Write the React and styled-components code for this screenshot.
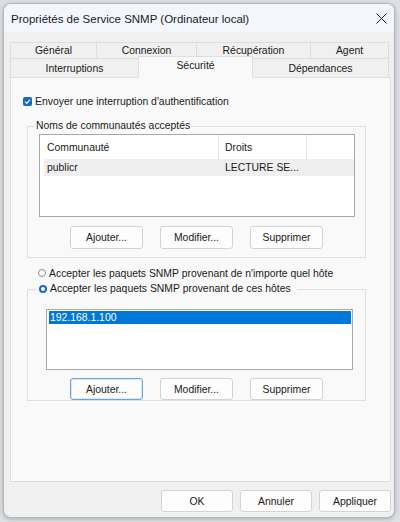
import React from "react";
import styled, { createGlobalStyle } from "styled-components";

const GlobalStyle = createGlobalStyle`
  html, body {
    margin: 0;
    padding: 0;
    background: #dde1e6;
    font-family: "Liberation Sans", Arial, sans-serif;
    font-size: 10.4px;
    color: #1a1a1a;
  }
`;

const Window = styled.div`
  width: 392px;
  height: 515px;
  margin: 3px 5px 4px 3px;
  box-sizing: border-box;
  border: 1px solid #b9b9b9;
  border-radius: 8px;
  background: #f0f0f0;
  box-shadow: 0 1px 4px rgba(0, 0, 0, 0.25);
  overflow: hidden;
  display: flex;
  flex-direction: column;
`;

const TitleBar = styled.div`
  height: 28px;
  flex-shrink: 0;
  display: flex;
  align-items: center;
  justify-content: space-between;
  padding: 0 6px 0 7px;
  background: #f3f6fb;
`;

const Title = styled.span`
  font-size: 11.5px;
  color: #1b1b1b;
  padding-top: 1px;
`;

const CloseButton = styled.button`
  width: 14px;
  height: 14px;
  padding: 0;
  border: none;
  background: none;
  display: flex;
  align-items: center;
  justify-content: center;
`;

const Body = styled.div`
  flex: 1;
  display: flex;
  flex-direction: column;
  padding: 10px 3px 0 6px;
`;

const TabRow = styled.div`
  display: flex;
  height: ${(p) => p.$height}px;
  padding-left: 1px;
`;

const Tab = styled.div`
  width: ${(p) => p.$width}px;
  box-sizing: border-box;
  display: flex;
  align-items: center;
  justify-content: center;
  border: 1px solid #dedede;
  border-bottom: none;
  margin-left: -1px;
  background: ${(p) => (p.$active ? "#f9f9f9" : "#f0f0f0")};
  position: relative;
  z-index: ${(p) => (p.$active ? 1 : 0)};
  margin-top: ${(p) => (p.$active ? -2 : 0)}px;
  height: ${(p) => (p.$active ? "calc(100% + 3px)" : "100%")};
  padding-bottom: ${(p) => (p.$active ? 4 : 0)}px;
`;

const Panel = styled.div`
  height: 405px;
  width: 381px;
  box-sizing: border-box;
  border: 1px solid #dedede;
  background: #f9f9f9;
  padding: 17px 0 0 12px;
  display: flex;
  flex-direction: column;
`;

const CheckRow = styled.label`
  display: flex;
  align-items: center;
  gap: 3px;
  height: 12px;
`;

const CheckBox = styled.span`
  width: 9px;
  height: 9px;
  border-radius: 2px;
  background: #1868c8;
  display: flex;
  align-items: center;
  justify-content: center;
`;

const Group = styled.fieldset`
  margin: ${(p) => p.$top}px 0 0 4px;
  width: 339px;
  height: ${(p) => p.$height}px;
  box-sizing: border-box;
  border: 1px solid #e0e0e0;
  padding: 0;
  display: flex;
  flex-direction: column;
`;

const Legend = styled.legend`
  margin-left: ${(p) => p.$offset}px;
  padding: 0 ${(p) => p.$padRight}px 0 2px;
  display: flex;
  align-items: center;
  gap: 3px;
  line-height: 12px;
`;

const ListView = styled.div`
  margin: ${(p) => p.$top}px 0 0 11px;
  width: 316px;
  height: 83px;
  box-sizing: border-box;
  border: 1px solid #a9a9a9;
  background: #fff;
  padding: 0 0 0 4px;
`;

const ListRow = styled.div`
  display: grid;
  grid-template-columns: 175px 88px;
  height: ${(p) => p.$height}px;
  background: ${(p) => (p.$shaded ? "#efefef" : "transparent")};
`;

const HeaderCell = styled.div`
  display: flex;
  align-items: center;
  padding-left: ${(p) => p.$pad}px;
  border-right: 1px solid #e6e6e6;
  white-space: nowrap;
  overflow: hidden;
`;

const Cell = styled.div`
  display: flex;
  align-items: center;
  padding-left: ${(p) => p.$pad}px;
  white-space: nowrap;
`;

const ListBox = styled.div`
  margin: 14px 0 0 18px;
  width: 307px;
  height: 61px;
  box-sizing: border-box;
  border: 1px solid #a9a9a9;
  background: #fff;
  padding: 1px 1px 0 2px;
`;

const ListItem = styled.div`
  height: 13px;
  display: flex;
  align-items: center;
  padding-left: 1px;
  background: ${(p) => (p.$selected ? "#0078d7" : "transparent")};
  color: ${(p) => (p.$selected ? "#fff" : "#1a1a1a")};
`;

const ButtonRow = styled.div`
  display: flex;
  gap: 17px;
  margin: ${(p) => p.$top}px 0 0 42px;
`;

const Button = styled.button`
  width: ${(p) => p.$width || 73}px;
  height: ${(p) => p.$height || 23}px;
  box-sizing: border-box;
  font-family: inherit;
  font-size: 10.4px;
  color: #1a1a1a;
  background: #fdfdfd;
  border: 1px solid ${(p) => (p.$focused ? "#6aa5de" : "#d3d3d3")};
  border-radius: 3px;
  padding: 0;
  box-shadow: ${(p) => (p.$focused ? "inset 0 0 0 1px #d8e8f7" : "none")};
`;

const RadioRow = styled.label`
  display: flex;
  align-items: center;
  gap: 3px;
  height: 12px;
  margin: 9px 0 0 15px;
`;

const Radio = styled.span`
  width: 8px;
  height: 8px;
  box-sizing: border-box;
  border-radius: 50%;
  background: #fff;
  border: ${(p) => (p.$checked ? "2.5px solid #1868c8" : "1px solid #8c8c8c")};
`;

const Footer = styled.div`
  display: flex;
  justify-content: flex-end;
  gap: 7px;
  padding: 8px 0 0 0;
`;

const tabsTop = [
  ["Général", 87],
  ["Connexion", 101],
  ["Récupération", 115],
  ["Agent", 79],
];

const tabsBottom = [
  ["Interruptions", 129],
  ["Sécurité", 115, true],
  ["Dépendances", 137],
];

export default function App() {
  return (
    <>
      <GlobalStyle />
      <Window>
        <TitleBar>
          <Title>Propriétés de Service SNMP (Ordinateur local)</Title>
          <CloseButton aria-label="Fermer">
            <svg width="11" height="11" viewBox="0 0 11 11">
              <path d="M0.5 0.5 L10.5 10.5 M10.5 0.5 L0.5 10.5" stroke="#222" strokeWidth="1" />
            </svg>
          </CloseButton>
        </TitleBar>
        <Body>
          <TabRow $height={16}>
            {tabsTop.map(([label, w]) => (
              <Tab key={label} $width={w}>
                {label}
              </Tab>
            ))}
          </TabRow>
          <TabRow $height={19}>
            {tabsBottom.map(([label, w, active]) => (
              <Tab key={label} $width={w} $active={active}>
                {label}
              </Tab>
            ))}
          </TabRow>
          <Panel>
            <CheckRow>
              <CheckBox>
                <svg width="7" height="7" viewBox="0 0 7 7">
                  <path d="M1 3.6 L2.8 5.3 L6 1.6" stroke="#fff" strokeWidth="1.2" fill="none" />
                </svg>
              </CheckBox>
              Envoyer une interruption d'authentification
            </CheckRow>

            <Group $top={13} $height={138}>
              <Legend $offset={6} $padRight={2}>
                Noms de communautés acceptés
              </Legend>
              <ListView $top={2}>
                <ListRow $height={24}>
                  <HeaderCell $pad={3}>Communauté</HeaderCell>
                  <HeaderCell $pad={6}>Droits</HeaderCell>
                </ListRow>
                <ListRow $height={17} $shaded>
                  <Cell $pad={3}>publicr</Cell>
                  <Cell $pad={6}>LECTURE SE...</Cell>
                </ListRow>
              </ListView>
              <ButtonRow $top={9}>
                <Button>Ajouter...</Button>
                <Button>Modifier...</Button>
                <Button>Supprimer</Button>
              </ButtonRow>
            </Group>

            <RadioRow>
              <Radio />
              Accepter les paquets SNMP provenant de n'importe quel hôte
            </RadioRow>

            <Group $top={4} $height={118}>
              <Legend $offset={9} $padRight={6}>
                <Radio $checked />
                Accepter les paquets SNMP provenant de ces hôtes
              </Legend>
              <ListBox>
                <ListItem $selected>192.168.1.100</ListItem>
              </ListBox>
              <ButtonRow $top={8}>
                <Button $height={22} $focused>
                  Ajouter...
                </Button>
                <Button $height={22}>Modifier...</Button>
                <Button $height={22}>Supprimer</Button>
              </ButtonRow>
            </Group>
          </Panel>
          <Footer>
            <Button $height={22} $width={72}>OK</Button>
            <Button $height={22} $width={72}>Annuler</Button>
            <Button $height={22} $width={72}>Appliquer</Button>
          </Footer>
        </Body>
      </Window>
    </>
  );
}
